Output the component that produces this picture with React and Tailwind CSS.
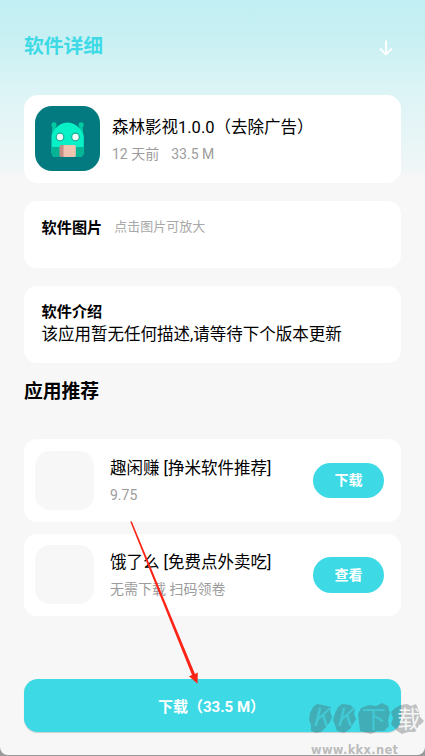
const apps = [
  { name: "趣闲赚 [挣米软件推荐]", desc: "9.75", action: "下载" },
  { name: "饿了么 [免费点外卖吃]", desc: "无需下载 扫码领卷", action: "查看" },
];

function AppIcon() {
  return (
    <svg viewBox="0 0 65 65" className="w-[65px] h-[65px] shrink-0">
      <rect width="65" height="65" rx="17" fill="#027a80" />
      <circle cx="19" cy="18.8" r="2.6" fill="#03c9a2" />
      <circle cx="46.2" cy="18.8" r="2.6" fill="#03c9a2" />
      <path d="M17.5 20l5 2-6 8zM47.5 20l-5 2 6 8z" fill="#03c9a2" />
      <path d="M16.5 46V30Q18 26 20 23Q25 16.6 32.5 16.5Q40 16.6 45 23Q47.5 26 48.8 30V46Q48.8 51 44 51H21Q16.5 51 16.5 46z" fill="#07f0c6" />
      <path d="M16.5 41H48.8V46Q48.8 51 44 51H21Q16.5 51 16.5 46z" fill="#06b394" />
      <circle cx="25" cy="31" r="4.4" fill="#1fa996" />
      <circle cx="40.5" cy="31" r="4.4" fill="#1fa996" />
      <circle cx="25" cy="31" r="3.2" fill="#f2fbf7" />
      <circle cx="40.5" cy="31" r="3.2" fill="#f2fbf7" />
      <rect x="24.5" y="39" width="10" height="12" rx="2" fill="#c68e85" />
      <rect x="28.5" y="39" width="12.3" height="12" rx="1.5" fill="#f0c3b1" />
    </svg>
  );
}

function AppRow({ name, desc, action }) {
  return (
    <div className="flex items-center rounded-[13px] bg-white pl-[11px] pr-[17px] h-[82.5px]">
      <div className="w-[59px] h-[59px] rounded-[15px] bg-[#f7f7f7]" />
      <div className="ml-4 mt-px flex-1 whitespace-nowrap">
        <div className="text-[16.5px] leading-6 text-black">{name}</div>
        <div className="mt-1 text-[14px] leading-5 text-[#9c9c9c]">{desc}</div>
      </div>
      <button className="w-[71px] h-[35.5px] rounded-full bg-[#3ddae6] pt-px text-[14px] font-bold text-white">
        {action}
      </button>
    </div>
  );
}

function Watermark() {
  return (
    <div className="absolute left-[306px] top-[696px] w-[119px] h-[60px]">
      <svg viewBox="306 696 119 60" className="w-full h-full">
        <g fill="#4b5557" fillOpacity="0.33">
          <path d="M313 707L317 704L323 705L331 707L330 711L332 717L330 722L326 727L321 732L316 733L311 731L311 725L309 720L310 713z" />
          <path d="M338 707L342 704L350 705L355 709L354 714L356 719L353 724L350 729L344 733L337 731L335 725L333 720L335 713z" />
          <path d="M361 708L369 705L376 706L382 703L388 706L390 713L388 720L389 726L384 731L377 731L371 734L360 731L359 722L358 714z" />
          <path d="M395 708L401 705L407 704L411 706L416 704L419 711L420 717L424 721L419 726L415 732L408 732L402 734L397 731L391 724L393 718L391 712z" />
        </g>
        <g fontFamily="Noto Sans CJK SC, sans-serif">
          <text x="312" y="726" fontSize="25" fontStyle="italic" fill="#42d0dc" fillOpacity="0.85">K</text>
          <text x="336" y="726" fontSize="25" fontStyle="italic" fill="#42d0dc" fillOpacity="0.85">K</text>
          <text x="362" y="728" fontSize="24" fill="#42d0dc" fillOpacity="0.85">下</text>
          <text x="397" y="728" fontSize="24" fill="#fff" fillOpacity="0.85">载</text>
        </g>
        <text x="311" y="753.5" fontSize="11.5" fontWeight="bold" textLength="87" fill="#777" fillOpacity="0.48" fontFamily="DejaVu Sans, sans-serif">
          www.kkx.net
        </text>
      </svg>
    </div>
  );
}

export default function App() {
  return (
    <div className="relative w-full h-[756px] overflow-hidden font-['Roboto','Noto_Sans_CJK_SC',sans-serif] bg-[#9a9a9a]">
      <div className="h-[755px] rounded-b-[8px] bg-[#f7f7f7] bg-[linear-gradient(#c1eff3_0,#c9f0f3_40px,#dcf4f6_90px,#f0f6f7_170px,#f7f7f7_178px)] px-6 pt-[31px]">
        <header className="flex items-center justify-between h-[30px]">
          <h1 className="mt-px text-[19.8px] leading-[30px] font-bold text-[#3ddae6]">软件详细</h1>
          <svg viewBox="0 0 14 16" className="w-[14px] h-[16px] mr-2 mt-[3px]" fill="none" stroke="#fff" strokeWidth="1.9">
            <path d="M7 0.5V14.5M1.2 8.7L7 14.5L12.8 8.7" />
          </svg>
        </header>

        <section className="mt-[33.5px] flex items-center h-[88.5px] rounded-[14px] bg-white pl-[11px]">
          <AppIcon />
          <div className="ml-3 mt-[3px] whitespace-nowrap">
            <div className="text-[16.5px] leading-6 text-black">森林影视1.0.0（去除广告）</div>
            <div className="mt-1 flex gap-3 text-[14px] leading-5 text-[#9c9c9c]">
              <span>12 天前</span>
              <span>33.5 M</span>
            </div>
          </div>
        </section>

        <section className="mt-[18px] flex gap-3 h-[67px] rounded-[13px] bg-white px-[17.5px] pt-[15px]">
          <h2 className="text-[15.2px] leading-6 font-bold text-black">软件图片</h2>
          <span className="text-[13px] leading-[22px] text-[#a8a8a8]">点击图片可放大</span>
        </section>

        <section className="mt-[18px] h-[76.5px] rounded-[13px] bg-white px-[17.5px] pt-[15px]">
          <h2 className="text-[15.2px] leading-[22px] font-bold text-black">软件介绍</h2>
          <p className="text-[16.5px] leading-6 whitespace-nowrap text-black">该应用暂无任何描述,请等待下个版本更新</p>
        </section>

        <h2 className="mt-[15px] text-[18.8px] leading-7 font-bold text-black">应用推荐</h2>

        <div className="mt-[33.5px] flex flex-col gap-3">
          {apps.map((app) => (
            <AppRow key={app.name} {...app} />
          ))}
        </div>

        <button className="mt-[63px] w-full h-[53px] rounded-[14px] bg-[#3ddae6] pt-[3px] pr-[2px] text-[15px] font-bold text-white shadow-[0_1px_1px_#c8cfd0]">
          下载（33.5 M）
        </button>
      </div>

      {/* arrow pointing at the download button */}
      <svg viewBox="0 0 70 164" className="absolute left-[130px] top-[521px] w-[70px] h-[164px]" fill="#fb2417">
        <path d="M0.2 0.5L1.8 0.5L65 153L67.8 151.5L67.5 162.7L59 155.3L62 154z" />
      </svg>
      <Watermark />
    </div>
  );
}
